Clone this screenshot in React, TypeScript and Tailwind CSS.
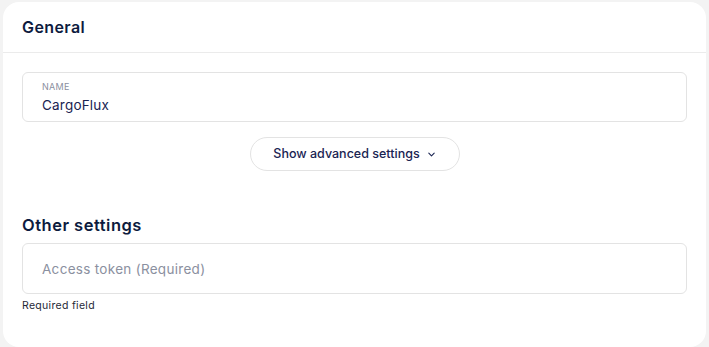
import React, { useState } from "react";

const App: React.FC = () => {
  const [name, setName] = useState("CargoFlux");
  const [token, setToken] = useState("");
  const [advanced, setAdvanced] = useState(false);

  return (
    <div
      className="min-h-[347px] bg-[#f3f3f3] pl-[3px] pr-[3px] pt-[2px]"
      style={{ fontFamily: "Inter, 'Noto Sans', sans-serif" }}
    >
      <div className="flex min-h-[345px] flex-col rounded-[16px] bg-white">
        {/* Header */}
        <div className="flex h-[51px] items-center border-b border-[#ebebeb] px-[19px]">
          <h2 className="text-[16px] font-semibold tracking-[0.4px] text-[#0d1b3e]">General</h2>
        </div>

        <div className="flex flex-col px-[19px] pt-[19px]">
          <label className="flex h-[50px] flex-col justify-center rounded-[6px] border border-[#e3e3e3] px-[19px]">
            <span className="text-[9px] uppercase leading-[12px] tracking-[0.3px] text-[#8b90a0]">Name</span>
            <input
              value={name}
              onChange={(e) => setName(e.target.value)}
              className="mt-[3px] text-[13.5px] leading-[18px] tracking-[0.2px] text-[#1a2452] outline-none"
            />
          </label>

          <div className="flex justify-center pt-[15px]">
            <button
              onClick={() => setAdvanced(!advanced)}
              className="flex h-[34px] w-[210px] items-center justify-center gap-[7px] rounded-full border border-[#e3e3e3] text-[12.5px] font-medium text-[#1a2452]"
            >
              Show advanced settings
              <svg width="9" height="9" viewBox="0 0 10 10" fill="none" className={advanced ? "rotate-180" : ""}>
                <path d="M2 3.5L5 6.5L8 3.5" stroke="#1a2452" strokeWidth="1.2" strokeLinecap="round" strokeLinejoin="round" />
              </svg>
            </button>
          </div>

          <h3 className="mt-[43px] text-[16.5px] font-semibold leading-[22px] tracking-[0.5px] text-[#0d1b3e]">
            Other settings
          </h3>

          <input
            value={token}
            onChange={(e) => setToken(e.target.value)}
            placeholder="Access token (Required)"
            className="mt-[7px] h-[51px] rounded-[6px] border border-[#e3e3e3] px-[19px] text-[13.5px] tracking-[0.3px] text-[#1a2452] outline-none placeholder:text-[#8b90a0]"
          />
          <p className="mt-[4px] text-[10.5px] tracking-[0.3px] text-[#1f2937]">Required field</p>
        </div>
      </div>
    </div>
  );
};

export default App;
